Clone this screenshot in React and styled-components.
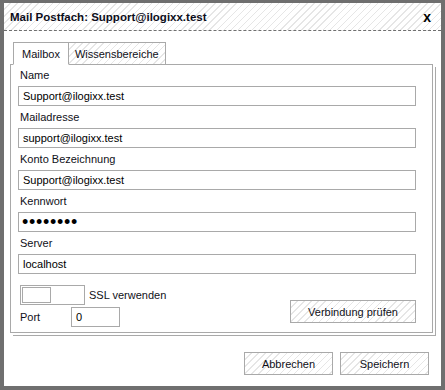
import React from "react";
import styled, { createGlobalStyle } from "styled-components";

const GlobalStyle = createGlobalStyle`
  html, body {
    margin: 0;
    padding: 0;
    background: #ffffff;
  }
  body {
    font-family: "Liberation Sans", Arial, sans-serif;
    font-size: 11px;
    color: #101018;
  }
`;

const hatch = `repeating-linear-gradient(135deg, #ffffff 0 4px, #e6e6e6 4px 5px)`;

const Dialog = styled.div`
  box-sizing: border-box;
  width: 445px;
  height: 390px;
  border: 4px solid #6f6f6f;
  border-top-width: 3px;
  background: #ffffff;
  display: flex;
  flex-direction: column;
`;

const TitleBar = styled.div`
  height: 28px;
  box-sizing: border-box;
  display: flex;
  align-items: center;
  justify-content: space-between;
  padding: 0 10px 0 6px;
  background: ${hatch};
  border-bottom: 1px dashed #6f6f6f;
`;

const Title = styled.span`
  font-weight: bold;
  font-size: 11.5px;
  color: #0d0d1a;
`;

const Close = styled.span`
  font-weight: bold;
  font-size: 14px;
  line-height: 1;
  color: #000;
  cursor: pointer;
`;

const Body = styled.div`
  flex: 1;
  padding: 11px 8px 0 6px;
  display: flex;
  flex-direction: column;
`;

const Tabs = styled.div`
  display: flex;
  padding-left: 3px;
  margin-bottom: -1px;
  position: relative;
  z-index: 1;
`;

const Tab = styled.div`
  height: 23px;
  box-sizing: border-box;
  padding: 0 ${(p) => (p.$active ? "8px" : "6px")};
  display: flex;
  align-items: center;
  border: 1px solid #a9a9a9;
  border-left-width: ${(p) => (p.$active ? "1px" : "0")};
  border-bottom-color: ${(p) => (p.$active ? "#ffffff" : "#a9a9a9")};
  background: ${(p) => (p.$active ? "#ffffff" : hatch)};
`;

const Panel = styled.div`
  height: 269px;
  box-sizing: border-box;
  border: 1px solid #a9a9a9;
  background: #ffffff;
  box-shadow: 2px 2px 0 0 #ffffff, 3px 3px 0 0 #a9a9a9;
  padding: 1px 16px 0 7px;
  display: flex;
  flex-direction: column;
`;

const Field = styled.div`
  display: flex;
  flex-direction: column;
  margin-bottom: 2px;
`;

const Label = styled.label`
  height: 18px;
  line-height: 19px;
  padding-left: 2px;
  margin-bottom: 2px;
`;

const Input = styled.div`
  box-sizing: border-box;
  height: 20px;
  width: ${(p) => p.$width || "auto"};
  border: 1px solid #a9a9a9;
  padding-left: ${(p) => (p.$secret ? "3px" : "4px")};
  display: flex;
  align-items: center;
  background: #fff;
  font-size: ${(p) => (p.$secret ? "18px" : "11px")};
  letter-spacing: ${(p) => (p.$secret ? "0.7px" : "0")};
  color: #000;
`;

const Bottom = styled.div`
  margin-top: 9px;
  display: flex;
  justify-content: space-between;
  align-items: flex-end;
`;

const Options = styled.div`
  display: flex;
  flex-direction: column;
  gap: 2px;
`;

const Row = styled.div`
  display: flex;
  align-items: center;
  gap: ${(p) => p.$gap || "4px"};
  padding-left: ${(p) => p.$indent || "0"};
`;

const Toggle = styled.div`
  box-sizing: border-box;
  width: 65px;
  height: 20px;
  border: 1px solid #a9a9a9;
  padding: 1px;
  display: flex;
`;

const Knob = styled.span`
  box-sizing: border-box;
  width: 29px;
  height: 16px;
  border: 1px solid #a9a9a9;
`;

const PortLabel = styled.span`
  width: 51px;
  padding-left: 2px;
`;

const Button = styled.button`
  box-sizing: border-box;
  width: ${(p) => p.$width || "89px"};
  height: 23px;
  border: 1px solid #a9a9a9;
  background: ${hatch};
  font-family: inherit;
  font-size: 11px;
  color: #101018;
  padding: 0;
  margin-bottom: ${(p) => p.$lift || "0"};
  cursor: pointer;
`;

const Footer = styled.div`
  margin-top: auto;
  display: flex;
  justify-content: flex-end;
  gap: 7px;
  padding: 0 12px 11px 0;
`;

const fields = [
  ["Name", "Support@ilogixx.test"],
  ["Mailadresse", "support@ilogixx.test"],
  ["Konto Bezeichnung", "Support@ilogixx.test"],
  ["Kennwort", "••••••••", true],
  ["Server", "localhost"],
];

export default function App() {
  return (
    <>
      <GlobalStyle />
      <Dialog>
        <TitleBar>
          <Title>Mail Postfach: Support@ilogixx.test</Title>
          <Close>x</Close>
        </TitleBar>
        <Body>
          <Tabs>
            <Tab $active>Mailbox</Tab>
            <Tab>Wissensbereiche</Tab>
          </Tabs>
          <Panel>
            {fields.map(([label, value, secret]) => (
              <Field key={label}>
                <Label>{label}</Label>
                <Input $secret={secret}>{value}</Input>
              </Field>
            ))}
            <Bottom>
              <Options>
                <Row $indent="2px">
                  <Toggle>
                    <Knob />
                  </Toggle>
                  <span>SSL verwenden</span>
                </Row>
                <Row $gap="0">
                  <PortLabel>Port</PortLabel>
                  <Input $width="49px">0</Input>
                </Row>
              </Options>
              <Button $width="126px" $lift="4px">
                Verbindung prüfen
              </Button>
            </Bottom>
          </Panel>
        </Body>
        <Footer>
          <Button>Abbrechen</Button>
          <Button>Speichern</Button>
        </Footer>
      </Dialog>
    </>
  );
}
